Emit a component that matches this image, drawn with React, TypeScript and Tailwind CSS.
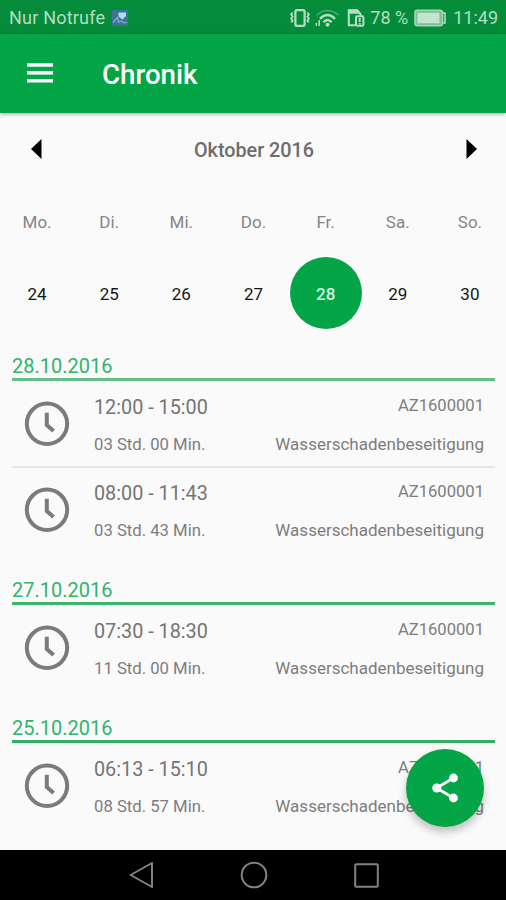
const FONT = "font-['Roboto','Noto_Sans',sans-serif]";

type Entry = { time: string; duration: string; code: string; task: string };
type Day = { date: string; line: string; entries: Entry[] };

const week = [
  ['Mo.', '24'],
  ['Di.', '25'],
  ['Mi.', '26'],
  ['Do.', '27'],
  ['Fr.', '28'],
  ['Sa.', '29'],
  ['So.', '30'],
];

const code = 'AZ1600001';
const task = 'Wasserschadenbeseitigung';

const days: Day[] = [
  {
    date: '28.10.2016',
    line: 'border-[#62bf87]',
    entries: [
      { time: '12:00 - 15:00', duration: '03 Std. 00 Min.', code, task },
      { time: '08:00 - 11:43', duration: '03 Std. 43 Min.', code, task },
    ],
  },
  {
    date: '27.10.2016',
    line: 'border-[#37b568]',
    entries: [{ time: '07:30 - 18:30', duration: '11 Std. 00 Min.', code, task }],
  },
  {
    date: '25.10.2016',
    line: 'border-[#2fb062]',
    entries: [{ time: '06:13 - 15:10', duration: '08 Std. 57 Min.', code, task }],
  },
];

function StatusBar() {
  return (
    <header className="flex h-[34px] items-center border-b border-[#04823a] bg-[#058c3a] pl-[9px] pr-[8px] pt-[2px] text-[18px] leading-none text-[#b4ddc2]">
      <span className="tracking-[0.2px]">Nur Notrufe</span>
      <svg className="ml-[7px]" width="16" height="16" viewBox="0 0 16 16">
        <rect width="16" height="16" rx="1" fill="#3f7398" />
        <path d="M6.5 2.6h7.5v3.4L10.5 9.4 6.5 6.6z" fill="#b9dce0" />
        <path d="M1 12.5l4.5-5 1 4.5 3-1 2 1.6h3" fill="none" stroke="#7fb0c4" strokeWidth="1.2" />
      </svg>
      <div className="ml-auto flex items-center">
        <svg width="20" height="18" viewBox="0 0 20 18" fill="none" stroke="#b4ddc2">
          <rect x="5.4" y="1.2" width="9.2" height="15.6" rx="1.5" strokeWidth="2.2" />
          <path d="M2.6 3.5l-1.4 2 1.4 2-1.4 2 1.4 2-1.4 2M17.4 3.5l1.4 2-1.4 2 1.4 2-1.4 2 1.4 2" strokeWidth="1.9" />
        </svg>
        <svg className="ml-[5px]" width="24" height="18" viewBox="0 0 24 18" fill="none" stroke="#b4ddc2">
          <path d="M1.5 6.2Q12.5-3.2 23.5 6.2" strokeWidth="1.6" opacity=".4" />
          <path d="M5 9.8q7.5-7.6 15 0" strokeWidth="2.4" />
          <path d="M8.4 13.2q4.1-4.4 8.2 0" strokeWidth="2.4" />
          <circle cx="12.5" cy="15.8" r="2" fill="#b4ddc2" stroke="none" />
          <path d="M4.2 11v6M1.4 14v3" strokeWidth="1.5" />
        </svg>
        <svg className="ml-[8px]" width="18" height="18" viewBox="0 0 18 18" fill="none" stroke="#b4ddc2">
          <path d="M8 16.3H1.8V1.2h8.4l3.3 4v2" strokeWidth="2.1" />
          <path d="M1 .4h9.5l3.5 4.4H1z" fill="#b4ddc2" stroke="none" />
          <rect x="9" y="7.3" width="7.4" height="9.4" rx="1" strokeWidth="2" />
          <path d="M12.7 9v4M12.7 14v1.6" strokeWidth="2" />
        </svg>
        <span className="ml-[5px]">78 %</span>
        <svg className="ml-[6px]" width="33" height="18" viewBox="0 0 33 18">
          <rect x="1" y="1.3" width="27.5" height="15.4" rx="2.5" fill="#7cc195" stroke="#a5d6b6" strokeWidth="1.6" />
          <rect x="3.4" y="3.8" width="22" height="10.4" fill="#c3e4ce" />
          <path d="M29 4h2v10h-2" fill="none" stroke="#b4ddc2" strokeWidth="1.6" />
        </svg>
        <span className="ml-[6px]">11:49</span>
      </div>
    </header>
  );
}

function AppBar() {
  return (
    <div className="z-10 flex h-[79px] items-center bg-[#04a546] pl-[27px] shadow-[0_1px_4px_rgba(60,20,50,0.4)]">
      <svg className="-mt-px" width="26" height="20" viewBox="0 0 26 20" fill="#fff">
        <rect y=".3" width="26" height="3.4" />
        <rect y="8.2" width="26" height="3.4" />
        <rect y="16.1" width="26" height="3.4" />
      </svg>
      <h1 className="ml-[49px] mt-[2px] text-[27.7px] font-medium leading-none text-white">Chronik</h1>
    </div>
  );
}

function Calendar() {
  return (
    <section className="flex h-[216px] flex-col">
      <div className="flex h-[73px] items-center justify-between pl-[31px] pr-[29px]">
        <svg className="-mt-px" width="11" height="20" viewBox="0 0 11 20">
          <path d="M10.5 0v20L0 10z" />
        </svg>
        <h2 className="mt-[3px] text-[19.8px] font-medium leading-none text-[#6d6d6d]">Oktober 2016</h2>
        <svg className="-mt-px" width="11" height="20" viewBox="0 0 11 20">
          <path d="M.5 0v20L11 10z" />
        </svg>
      </div>
      <div className="grid grow grid-cols-7 grid-rows-[71px_72px] pl-px text-center text-[17px]">
        {week.map(([name]) => (
          <div key={name} className="flex items-center justify-center pt-[2px] leading-none text-[#858585]">
            {name}
          </div>
        ))}
        {week.map(([name, day]) => (
          <div
            key={name + day}
            className={
              day === '28'
                ? 'flex items-center justify-center rounded-full bg-[#04a546] pt-[2px] font-medium leading-none text-[#d9f5e2]'
                : 'flex items-center justify-center pt-[2px] leading-none text-[#161616]'
            }
          >
            {day}
          </div>
        ))}
      </div>
    </section>
  );
}

function EntryRow({ entry, divided }: { entry: Entry; divided: boolean }) {
  return (
    <li
      className={
        divided
          ? '-mb-px flex h-[87px] border-b-2 border-[#e6e6e6] pl-[12px] pr-[11px]'
          : 'flex h-[86px] pl-[12px] pr-[11px]'
      }
    >
      <svg className="mt-[20px]" width="46" height="46" viewBox="0 0 46 46" fill="none" stroke="#7b7b7b">
        <circle cx="23" cy="22.8" r="20.2" strokeWidth="4" />
        <path d="M22.8 11.8v12.2l6.8 6" strokeWidth="4" />
      </svg>
      <div className="ml-[24px] flex flex-col leading-none">
        <span className="mt-[17px] text-[19.8px] text-[#747474]">{entry.time}</span>
        <span className="mt-[19px] text-[16.7px] text-[#7d7d7d]">{entry.duration}</span>
      </div>
      <div className="ml-auto flex flex-col items-end leading-none text-[#7d7d7d]">
        <span className="mt-[17px] text-[16.6px]">{entry.code}</span>
        <span className="mt-[21px] text-[17px]">{entry.task}</span>
      </div>
    </li>
  );
}

function DaySection({ day }: { day: Day }) {
  return (
    <section className="ml-[12px] mr-[11px]">
      <h3
        className={`flex h-[52px] items-end border-b-[3px] pb-[2px] text-[20px] leading-none text-[#2fb56b] ${day.line}`}
      >
        {day.date}
      </h3>
      <ul>
        {day.entries.map((entry, i) => (
          <EntryRow key={entry.time} entry={entry} divided={i < day.entries.length - 1} />
        ))}
      </ul>
    </section>
  );
}

function ShareButton() {
  return (
    <button className="absolute bottom-[73px] right-[22px] flex size-[78px] items-center justify-center rounded-full bg-[#04a546] shadow-[0_5px_9px_rgba(0,0,0,0.24)]">
      <svg width="28" height="30" viewBox="0 0 28 30" fill="#fff">
        <path d="M22.5 5L5.5 15l17 10" fill="none" stroke="#fff" strokeWidth="2.8" />
        <circle cx="22.5" cy="5" r="4.4" />
        <circle cx="5.8" cy="15" r="4.6" />
        <circle cx="22.5" cy="25" r="4.4" />
      </svg>
    </button>
  );
}

function NavBar() {
  return (
    <nav className="flex h-[50px] items-center bg-black pl-[129px]">
      <svg width="25" height="28" viewBox="0 0 25 28" fill="none" stroke="#828282" strokeWidth="2">
        <path d="M23 2v24L1.6 14z" strokeLinejoin="round" />
      </svg>
      <svg className="ml-[85.5px]" width="28" height="28" viewBox="0 0 28 28" fill="none" stroke="#828282" strokeWidth="2">
        <circle cx="14" cy="14" r="12.3" />
      </svg>
      <svg className="ml-[86px]" width="25" height="25" viewBox="0 0 25 25" fill="none" stroke="#828282" strokeWidth="2">
        <rect x="1.2" y="1.2" width="22.6" height="22.6" rx="1" />
      </svg>
    </nav>
  );
}

export default function App() {
  return (
    <div className={`relative flex h-[900px] w-[506px] flex-col overflow-hidden bg-[#fafafa] ${FONT}`}>
      <StatusBar />
      <AppBar />
      <Calendar />
      <main className="min-h-0 grow overflow-hidden">
        {days.map((day) => (
          <DaySection key={day.date} day={day} />
        ))}
      </main>
      <NavBar />
      <ShareButton />
    </div>
  );
}
